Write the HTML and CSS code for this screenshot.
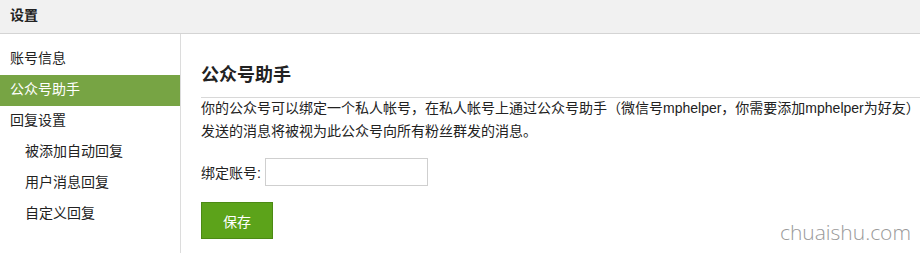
FILE: index.html
```html
<!DOCTYPE html>
<html lang="zh-CN">
<head>
<meta charset="utf-8">
<title>设置</title>
<link rel="stylesheet" href="styles.css">
</head>
<body>
<div class="page">
  <header class="topbar">设置</header>
  <div class="layout">
    <nav class="sidebar">
      <a class="nav-item">账号信息</a>
      <a class="nav-item active">公众号助手</a>
      <a class="nav-item">回复设置</a>
      <a class="nav-item sub">被添加自动回复</a>
      <a class="nav-item sub">用户消息回复</a>
      <a class="nav-item sub">自定义回复</a>
    </nav>
    <main class="content">
      <h2 class="title">公众号助手</h2>
      <p class="desc">你的公众号可以绑定一个私人帐号，在私人帐号上通过公众号助手（微信号mphelper，你需要添加mphelper为好友）发送的消息将被视为此公众号向所有粉丝群发的消息。</p>
      <div class="form-row">
        <label class="label">绑定账号:</label>
        <input class="input" type="text">
      </div>
      <button class="btn">保存</button>
    </main>
  </div>
  <div class="watermark">chuaishu.com</div>
</div>
</body>
</html>
```
FILE: styles.css
```css
html, body {
  margin: 0;
  padding: 0;
  background: #fff;
}
body {
  font-family: "Liberation Sans", "Noto Sans CJK SC", sans-serif;
  font-size: 14px;
  color: #222;
  width: 920px;
  height: 253px;
  overflow: hidden;
}
.page {
  position: relative;
  height: 253px;
}
.topbar {
  height: 33px;
  line-height: 31px;
  padding-left: 10px;
  background: #f1f1f1;
  border-bottom: 1px solid #d4d4d4;
  font-weight: bold;
  font-size: 14px;
  color: #222;
}
.layout {
  display: flex;
  height: 219px;
}
.sidebar {
  width: 180px;
  border-right: 1px solid #dcdcdc;
  padding-top: 10px;
  display: flex;
  flex-direction: column;
}
.nav-item {
  display: block;
  height: 31px;
  line-height: 29px;
  padding-left: 10px;
  color: #222;
}
.nav-item.sub {
  padding-left: 25px;
}
.nav-item.active {
  background: #77a444;
  color: #fff;
}
.content {
  flex: 1;
  padding: 29px 0 0 20px;
}
.title {
  margin: 0;
  font-size: 18px;
  line-height: 24px;
  font-weight: bold;
  padding-bottom: 10px;
  border-bottom: 1px solid #d8d8d8;
  color: #222;
}
.desc {
  margin: -1px 0 0;
  line-height: 23px;
  color: #222;
}
.form-row {
  display: flex;
  align-items: center;
  margin-top: 15px;
}
.label {
  width: 64px;
  color: #222;
}
.input {
  width: 161px;
  height: 26px;
  margin: 0;
  padding: 0;
  border: 1px solid #cfcfcf;
  box-sizing: content-box;
}
.btn {
  display: block;
  margin-top: 16px;
  width: 72px;
  height: 37px;
  background: #5ca31a;
  border: 1px solid #4c8a14;
  color: #fff;
  font-family: "Liberation Sans", "Noto Sans CJK SC", sans-serif;
  font-size: 14px;
  padding: 0;
}
.watermark {
  position: absolute;
  right: 9px;
  bottom: 7px;
  font-family: "Open Sans", "DejaVu Sans", sans-serif;
  font-weight: 300;
  font-size: 21px;
  color: #9a9a9a;
  text-shadow: 0 0 2px #fff;
}
```
